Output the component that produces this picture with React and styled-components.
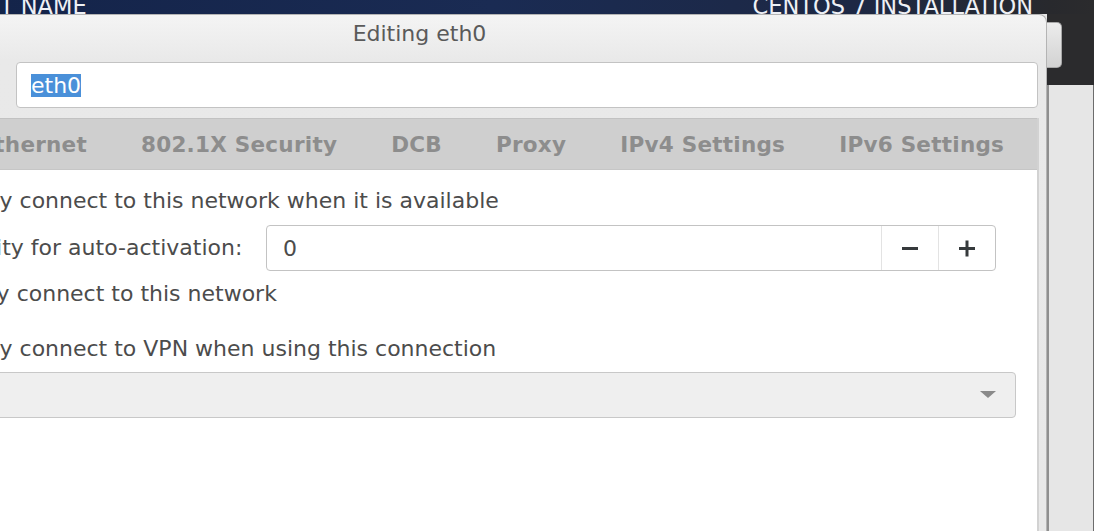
import styled, { createGlobalStyle } from "styled-components";

const GlobalStyle = createGlobalStyle`
  html, body {
    margin: 0;
    padding: 0;
    background: #e6e6e6;
  }
  body {
    font-family: "DejaVu Sans", "Noto Sans", sans-serif;
  }
`;

const Screen = styled.div`
  width: 1094px;
  height: 531px;
  overflow: hidden;
  display: flex;
  flex-direction: column;
  background: #e6e6e6;
`;

const TopBar = styled.header`
  flex: none;
  height: 14px;
  overflow: hidden;
  display: flex;
  align-items: flex-end;
  justify-content: space-between;
  padding-right: 61px;
  background: linear-gradient(90deg, #14244a 0%, #1a2b53 45%, #1d2844 78%, #28292d 96%, #2b2b2d 100%);
  color: #eef0f5;
  font-size: 22.5px;
  line-height: 1;
`;

const BarText = styled.span`
  white-space: nowrap;
  margin-bottom: -3px;
  margin-left: ${(p) => p.$shift || 0}px;
`;

const Main = styled.div`
  flex: 1;
  min-height: 0;
  display: flex;
`;

const Dialog = styled.section`
  flex: none;
  width: 1271px;
  margin-left: -224px;
  box-sizing: border-box;
  display: flex;
  flex-direction: column;
  border: 1px solid #b4b4b4;
  border-bottom: none;
  border-radius: 8px 8px 0 0;
  background: linear-gradient(#f4f4f4 0, #e9e9e9 45px, #e8e8e8 100%);
`;

const TitleBar = styled.div`
  flex: none;
  height: 37px;
  display: flex;
  align-items: center;
  justify-content: center;
  padding-left: 16px;
  font-size: 22px;
  color: #5a5a5a;
`;

const Body = styled.div`
  flex: 1;
  display: flex;
  flex-direction: column;
  padding: 10px 8px 0 12px;
  min-height: 0;
`;

const NameRow = styled.div`
  display: flex;
  align-items: center;
  height: 46px;
`;

const NameLabel = styled.label`
  flex: none;
  width: 215px;
  margin-right: 12px;
  font-size: 22px;
  color: #4c4c4c;
  white-space: nowrap;
  overflow: hidden;
`;

const Entry = styled.div`
  flex: 1;
  height: 46px;
  box-sizing: border-box;
  display: flex;
  align-items: center;
  padding-left: 14px;
  background: #fff;
  border: 1px solid #c3c3c3;
  border-radius: 4px;
  font-size: 22px;
  color: #4c4c4c;
`;

const Selected = styled.span`
  background: #4a90d9;
  color: #fff;
  line-height: 23px;
`;

const Notebook = styled.div`
  flex: 1;
  margin-top: 10px;
  margin-right: -1px;
  display: flex;
  flex-direction: column;
  border-left: 1px solid #c4c4c4;
  border-right: 2px solid #d2d2d2;
`;

const TabStrip = styled.div`
  flex: none;
  height: 50px;
  display: flex;
  padding-left: 12px;
  background: #cfcfcf;
  border-top: 1px solid #c2c2c2;
  border-bottom: 1px solid #c6c6c6;
`;

const Tab = styled.div`
  display: flex;
  align-items: center;
  padding: 0 27px;
  font-size: 21.5px;
  font-weight: bold;
  letter-spacing: 0.25px;
  white-space: nowrap;
  color: ${(p) => (p.$active ? "#4c4c4c" : "#8d8d8d")};
  background: ${(p) => (p.$active ? "#fff" : "transparent")};
`;

const Panel = styled.div`
  flex: 1;
  display: flex;
  flex-direction: column;
  padding: 18px 21px 0 23px;
  background: #fff;
`;

const CheckRow = styled.label`
  display: flex;
  align-items: center;
  height: 26px;
  margin-top: ${(p) => p.$gap || 0}px;
`;

const Box = styled.span`
  flex: none;
  width: 18px;
  height: 18px;
  margin-right: 30px;
  box-sizing: border-box;
  border: 1px solid #b0b0b0;
  border-radius: 3px;
  background: ${(p) => (p.$checked ? "#4a90d9" : "#fff")};
`;

const Text = styled.span`
  font-size: 22px;
  line-height: 26px;
  color: #4c4c4c;
  white-space: nowrap;
`;

const SpinRow = styled.div`
  display: grid;
  grid-template-columns: 453px 730px;
  align-items: center;
  height: 46px;
  margin-top: 11px;
`;

const Spin = styled.div`
  display: flex;
  height: 46px;
  box-sizing: border-box;
  background: #fff;
  border: 1px solid #c3c3c3;
  border-radius: 4px;
`;

const SpinValue = styled.div`
  flex: 1;
  display: flex;
  align-items: center;
  padding-left: 16px;
  font-size: 22px;
  color: #4c4c4c;
`;

const SpinButton = styled.div`
  flex: none;
  width: 56px;
  display: flex;
  align-items: center;
  justify-content: center;
  border-left: 1px solid #e3e3e3;
`;

const Combo = styled.div`
  display: flex;
  align-items: center;
  justify-content: flex-end;
  height: 46px;
  margin-top: 10px;
  padding-right: 19px;
  box-sizing: border-box;
  background: #efefef;
  border: 1px solid #c8c8c8;
  border-radius: 4px;
`;

const Strip = styled.aside`
  flex: 1;
  display: flex;
  flex-direction: column;
`;

const StripTop = styled.div`
  flex: none;
  height: 71px;
  background: #2b2b2d;
`;

const HelpEdge = styled.div`
  width: 15px;
  height: 46px;
  margin-top: 8px;
  box-sizing: border-box;
  border: 1px solid #a8a8a8;
  border-left: none;
  border-radius: 0 5px 5px 0;
  background: linear-gradient(#ececec, #d2d2d2);
`;

const StripBody = styled.div`
  flex: 1;
  background: #e6e6e6;
  border-left: 2px solid #8f8f8f;
  border-right: 1px solid #6c6c6c;
`;

const tabs = [
  "General",
  "Ethernet",
  "802.1X Security",
  "DCB",
  "Proxy",
  "IPv4 Settings",
  "IPv6 Settings",
];

const Minus = () => (
  <svg width="18" height="18" viewBox="0 0 18 18">
    <path d="M1 9.5h16" stroke="#363a3c" strokeWidth="3" />
  </svg>
);

const Plus = () => (
  <svg width="18" height="18" viewBox="0 0 18 18">
    <path d="M1 9.5h16M9 1.5v16" stroke="#363a3c" strokeWidth="3" />
  </svg>
);

const Arrow = () => (
  <svg width="16" height="8" viewBox="0 0 16 8">
    <path d="M0 0h16L8 7z" fill="#8a8a8a" />
  </svg>
);

export default function App() {
  return (
    <Screen>
      <GlobalStyle />
      <TopBar>
        <BarText $shift={-196}>NETWORK &amp; HOST NAME</BarText>
        <BarText>CENTOS 7 INSTALLATION</BarText>
      </TopBar>
      <Main>
        <Dialog>
          <TitleBar>Editing eth0</TitleBar>
          <Body>
            <NameRow>
              <NameLabel>Connection name:</NameLabel>
              <Entry>
                <Selected>eth0</Selected>
              </Entry>
            </NameRow>
            <Notebook>
              <TabStrip>
                {tabs.map((t, i) => (
                  <Tab key={t} $active={i === 0}>
                    {t}
                  </Tab>
                ))}
              </TabStrip>
              <Panel>
                <CheckRow>
                  <Box $checked />
                  <Text>Automatically connect to this network when it is available</Text>
                </CheckRow>
                <SpinRow>
                  <Text>Connection priority for auto-activation:</Text>
                  <Spin>
                    <SpinValue>0</SpinValue>
                    <SpinButton>
                      <Minus />
                    </SpinButton>
                    <SpinButton>
                      <Plus />
                    </SpinButton>
                  </Spin>
                </SpinRow>
                <CheckRow $gap={10}>
                  <Box $checked />
                  <Text>All users may connect to this network</Text>
                </CheckRow>
                <CheckRow $gap={29}>
                  <Box />
                  <Text>Automatically connect to VPN when using this connection</Text>
                </CheckRow>
                <Combo>
                  <Arrow />
                </Combo>
              </Panel>
            </Notebook>
          </Body>
        </Dialog>
        <Strip>
          <StripTop>
            <HelpEdge />
          </StripTop>
          <StripBody />
        </Strip>
      </Main>
    </Screen>
  );
}
